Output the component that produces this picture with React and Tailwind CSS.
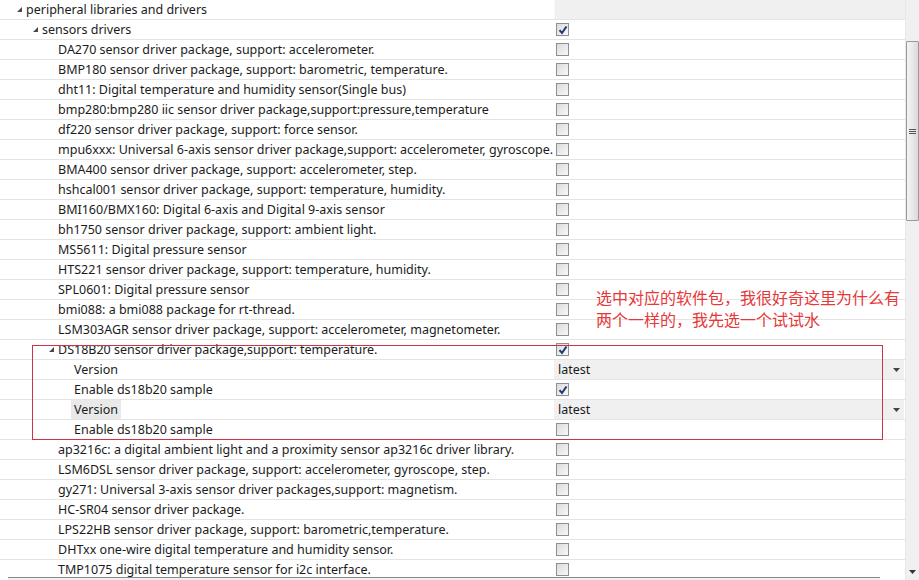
import React from 'react';

const rows = [
  { t: 'peripheral libraries and drivers', lv: 0, open: true, head: true },
  { t: 'sensors drivers', lv: 1, open: true, cb: 'on' },
  { t: 'DA270 sensor driver package, support: accelerometer.', lv: 2, cb: 'off' },
  { t: 'BMP180 sensor driver package, support: barometric, temperature.', lv: 2, cb: 'off' },
  { t: 'dht11: Digital temperature and humidity sensor(Single bus)', lv: 2, cb: 'off' },
  { t: 'bmp280:bmp280 iic sensor driver package,support:pressure,temperature', lv: 2, cb: 'off' },
  { t: 'df220 sensor driver package, support: force sensor.', lv: 2, cb: 'off' },
  { t: 'mpu6xxx: Universal 6-axis sensor driver package,support: accelerometer, gyroscope.', lv: 2, cb: 'off' },
  { t: 'BMA400 sensor driver package, support: accelerometer, step.', lv: 2, cb: 'off' },
  { t: 'hshcal001 sensor driver package, support: temperature, humidity.', lv: 2, cb: 'off' },
  { t: 'BMI160/BMX160: Digital 6-axis and Digital 9-axis sensor', lv: 2, cb: 'off' },
  { t: 'bh1750 sensor driver package, support: ambient light.', lv: 2, cb: 'off' },
  { t: 'MS5611: Digital pressure sensor', lv: 2, cb: 'off' },
  { t: 'HTS221 sensor driver package, support: temperature, humidity.', lv: 2, cb: 'off' },
  { t: 'SPL0601: Digital pressure sensor', lv: 2, cb: 'off' },
  { t: 'bmi088: a bmi088 package for rt-thread.', lv: 2, cb: 'off' },
  { t: 'LSM303AGR sensor driver package, support: accelerometer, magnetometer.', lv: 2, cb: 'off' },
  { t: 'DS18B20 sensor driver package,support: temperature.', lv: 2, open: true, cb: 'on' },
  { t: 'Version', lv: 3, combo: 'latest' },
  { t: 'Enable ds18b20 sample', lv: 3, cb: 'on' },
  { t: 'Version', lv: 3, combo: 'latest', sel: true },
  { t: 'Enable ds18b20 sample', lv: 3, cb: 'off' },
  { t: 'ap3216c: a digital ambient light and a proximity sensor ap3216c driver library.', lv: 2, cb: 'off' },
  { t: 'LSM6DSL sensor driver package, support: accelerometer, gyroscope, step.', lv: 2, cb: 'off' },
  { t: 'gy271: Universal 3-axis sensor driver packages,support: magnetism.', lv: 2, cb: 'off' },
  { t: 'HC-SR04 sensor driver package.', lv: 2, cb: 'off' },
  { t: 'LPS22HB sensor driver package, support: barometric,temperature.', lv: 2, cb: 'off' },
  { t: 'DHTxx one-wire digital temperature and humidity sensor.', lv: 2, cb: 'off' },
  { t: 'TMP1075 digital temperature sensor for i2c interface.', lv: 2, cb: 'off' },
];

const pads = ['pl-[17px]', 'pl-[33px]', 'pl-[49px]', 'pl-[65px]'];

const Tri = () => (
  <svg width="9" height="6" viewBox="0 0 9 6" className="shrink-0">
    <polygon points="5,0 5,5 0,5" fill="#4a4a4a" />
  </svg>
);

const Check = ({ on }) => (
  <div className="w-[13px] h-[13px] border border-[#8e8f8f] bg-gradient-to-br from-[#dcdcdc] to-[#f8f8f8] flex items-center justify-center">
    {on && (
      <svg width="10" height="10" viewBox="0 0 10 10">
        <path d="M1.5 5.2 L4 8 L8.5 1.5" stroke="#1d3570" strokeWidth="2" fill="none" />
      </svg>
    )}
  </div>
);

const Row = ({ r }) => (
  <div className="flex h-5 border-b border-[#e4e4e4] shrink-0">
    <div className={`w-[554px] flex items-center ${pads[r.lv]} whitespace-nowrap overflow-visible`}>
      {r.open ? <Tri /> : <span className="w-[9px] shrink-0" />}
      <span className={r.sel ? 'bg-[#e9e9e9] px-[3px] -ml-[3px] pt-[1px] leading-[18px]' : 'pt-[2px]'}>{r.t}</span>
    </div>
    {r.head && <div className="flex-1 bg-[#f0f0f0] border-l border-[#f7f7f7]" />}
    {r.cb && (
      <div className="flex-1 flex items-center pl-[2px]">
        <Check on={r.cb === 'on'} />
      </div>
    )}
    {r.combo && (
      <div className="flex-1 flex items-center justify-between bg-[#f0f0f0] pl-[4px] pr-[4px] mr-[1px]">
        <span className="pt-[2px]">{r.combo}</span>
        <svg width="7" height="4" viewBox="0 0 7 4">
          <polygon points="0,0 7,0 3.5,4" fill="#444" />
        </svg>
      </div>
    )}
  </div>
);

export default function App() {
  return (
    <div
      className="w-[919px] h-[580px] relative overflow-hidden bg-white flex text-[12.5px] text-[#1b1b1b]"
      style={{ fontFamily: '"Noto Sans", "Noto Sans CJK SC", sans-serif' }}
    >
      <div className="w-[905px] flex flex-col">
        <div className="h-[577px] overflow-hidden flex flex-col">
          {rows.map((r, i) => (
            <Row key={i} r={r} />
          ))}
        </div>
        <div className="h-[3px] ml-[8px] w-[872px] border-t border-[#8a8a8a] bg-[#f0f0f0]" />
      </div>

      <div className="w-[14px] h-full flex flex-col bg-[#f0f0f0] border-l border-[#e8e8e8]">
        <div className="h-[41px]" />
        <div className="h-[180px] border border-[#9a9a9a] rounded-[1px] bg-gradient-to-r from-[#f4f4f4] via-[#e9e9eb] to-[#dadadc] flex flex-col items-center justify-center gap-[1px]">
          <div className="w-[7px] h-px bg-[#555]" />
          <div className="w-[7px] h-px bg-[#555]" />
          <div className="w-[7px] h-px bg-[#555]" />
        </div>
        <div className="flex-1" />
        <div className="h-[16px] flex items-center justify-center">
          <svg width="7" height="4" viewBox="0 0 7 4">
            <polygon points="0,0 7,0 3.5,4" fill="#333" />
          </svg>
        </div>
      </div>

      <div className="absolute left-[32px] top-[345px] w-[851px] h-[95px] border border-[#d32f45] pointer-events-none" />

      <div
        className="absolute left-[596px] top-[286px] w-[320px] text-[16px] leading-[22px] text-[#e6383a]"
        style={{ fontFamily: '"Noto Sans CJK SC", sans-serif' }}
      >
        选中对应的软件包，我很好奇这里为什么有
        <br />
        两个一样的，我先选一个试试水
      </div>
    </div>
  );
}
